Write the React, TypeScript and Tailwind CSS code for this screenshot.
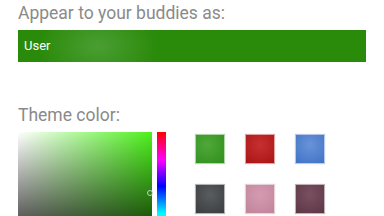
import React from 'react';

const swatches = [
  { name: 'green', className: 'bg-[radial-gradient(circle_at_40%_35%,#4fa83a,#2f8f1c)]' },
  { name: 'red', className: 'bg-[radial-gradient(circle_at_50%_35%,#c83030,#a81414)]' },
  { name: 'blue', className: 'bg-[radial-gradient(circle_at_50%_35%,#6a93d8,#3f72c6)]' },
  { name: 'slate', className: 'bg-[radial-gradient(circle_at_50%_35%,#5a5d60,#3a3d40)]' },
  { name: 'pink', className: 'bg-[radial-gradient(circle_at_50%_35%,#d49bb0,#c0849a)]' },
  { name: 'plum', className: 'bg-[radial-gradient(circle_at_50%_35%,#7a5060,#5c3545)]' },
];

const App: React.FC = () => {
  return (
    <div className="h-[216px] w-[384px] overflow-hidden bg-white font-['Roboto','Liberation_Sans',sans-serif]">
      <div className="px-[18px] pt-[2px]">
        <div className="text-[17.5px] leading-[22px] text-[#8a8a8a]">Appear to your buddies as:</div>

        <div className="mt-[6px] flex h-[32px] w-[348px] items-center bg-[radial-gradient(ellipse_60px_40px_at_80px_50%,#4a9e32,#2a8a0a)] pl-[6px] text-[13px] text-white">
          User
        </div>

        <div className="mt-[42px] text-[17.5px] leading-[22px] text-[#8a8a8a]">Theme color:</div>

        <div className="mt-[6px] flex items-start">
          {/* saturation / value square */}
          <div className="relative h-[134px] w-[134px] bg-[#4cf01a]">
            <div className="absolute inset-0 bg-gradient-to-r from-white to-transparent" />
            <div className="absolute inset-0 bg-gradient-to-b from-transparent to-black" />
            <div className="absolute left-[129px] top-[58px] h-[6px] w-[6px] rounded-full border border-[#cccccc]" />
          </div>

          {/* hue strip */}
          <div className="ml-[5px] h-[164px] w-[9px] bg-[linear-gradient(to_bottom,#ff0000,#ff00ff_17%,#0000ff_33%,#00ffff_50%,#00ff00_67%,#ffff00_83%,#ff0000)]" />

          {/* preset swatches */}
          <div className="ml-[29px] mt-[2px] grid grid-cols-3 gap-x-[20px] gap-y-[20px]">
            {swatches.map((s) => (
              <div
                key={s.name}
                className={`h-[30px] w-[30px] border border-white/60 shadow-[0_0_1px_rgba(0,0,0,0.2)] ${s.className}`}
              />
            ))}
          </div>
        </div>
      </div>
    </div>
  );
};

export default App;
